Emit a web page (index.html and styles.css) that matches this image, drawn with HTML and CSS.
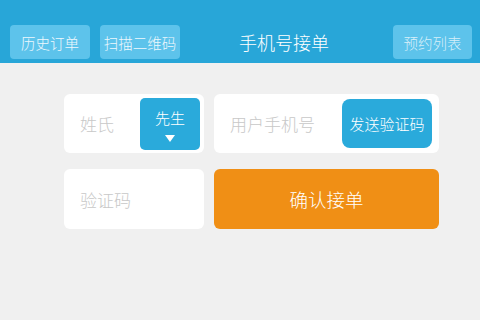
FILE: index.html
```html
<!DOCTYPE html>
<html lang="zh-CN">
<head>
    <meta charset="UTF-8">
    <meta name="viewport" content="width=device-width, initial-scale=1.0">
    <title>手机号接单</title>
    <link rel="stylesheet" href="styles.css">
</head>
<body>
    <div class="navbar">
        <button class="nav-btn">历史订单</button>
        <button class="nav-btn">扫描二维码</button>
        <div class="nav-title">手机号接单</div>
        <button class="nav-btn nav-btn-right">预约列表</button>
    </div>

    <div class="form">
        <div class="card">
            <span class="placeholder">姓氏</span>
            <button class="gender-btn">
                先生
                <span class="arrow"></span>
            </button>
        </div>
        <div class="card">
            <span class="placeholder">用户手机号</span>
            <button class="code-btn">发送验证码</button>
        </div>
        <div class="card">
            <span class="placeholder">验证码</span>
        </div>
        <button class="confirm-btn">确认接单</button>
    </div>
</body>
</html>
```

FILE: styles.css
```css
/* General */
body {
    margin: 0;
    padding: 0;
    background-color: #f0f0f0;
    font-family: "Noto Sans CJK SC", "Noto Sans", sans-serif;
    font-weight: 300;
    width: 480px;
    height: 320px;
    overflow: hidden;
}

button {
    font-family: inherit;
    font-weight: inherit;
    border: none;
    cursor: pointer;
    padding: 0;
}

/* Navbar */
.navbar {
    height: 63px;
    background-color: #28a6d8;
    display: flex;
    align-items: flex-end;
    padding: 0 8px 4px 10px;
    box-sizing: border-box;
    gap: 10px;
}

.nav-btn {
    width: 80px;
    height: 34px;
    background-color: #5dc3eb;
    color: #eef8fd;
    font-size: 14.5px;
    border-radius: 4px;
}

.nav-title {
    flex: 1;
    height: 34px;
    line-height: 34px;
    text-align: center;
    color: #fff;
    font-size: 18px;
    padding-right: 5px;
}

.nav-btn-right {
    width: 79px;
    color: #d8eff9;
}

/* Form */
.form {
    display: grid;
    grid-template-columns: 140px 225px;
    column-gap: 10px;
    row-gap: 16px;
    margin: 31px 0 0 64px;
}

.card {
    height: 59px;
    background-color: #fff;
    border-radius: 6px;
    display: flex;
    align-items: center;
    justify-content: space-between;
    padding: 0 4px 0 16px;
}

.card:nth-child(3) {
    height: 60px;
}

.placeholder {
    color: #c8c8c8;
    font-size: 17px;
}

.gender-btn {
    width: 60px;
    height: 52px;
    background-color: #2aaadb;
    color: #fff;
    font-size: 15px;
    border-radius: 5px;
    display: flex;
    flex-direction: column;
    align-items: center;
    padding-top: 9px;
    box-sizing: border-box;
    gap: 6px;
    line-height: 22px;
}

.arrow {
    width: 0;
    height: 0;
    border-left: 5.5px solid transparent;
    border-right: 5.5px solid transparent;
    border-top: 7px solid #fff;
}

.code-btn {
    width: 90px;
    height: 49px;
    margin-right: 3px;
    background-color: #2aaadb;
    color: #fff;
    font-size: 15px;
    border-radius: 8px;
}

.confirm-btn {
    height: 60px;
    background-color: #f08f15;
    color: #fff;
    font-size: 18.5px;
    border-radius: 6px;
}
```
